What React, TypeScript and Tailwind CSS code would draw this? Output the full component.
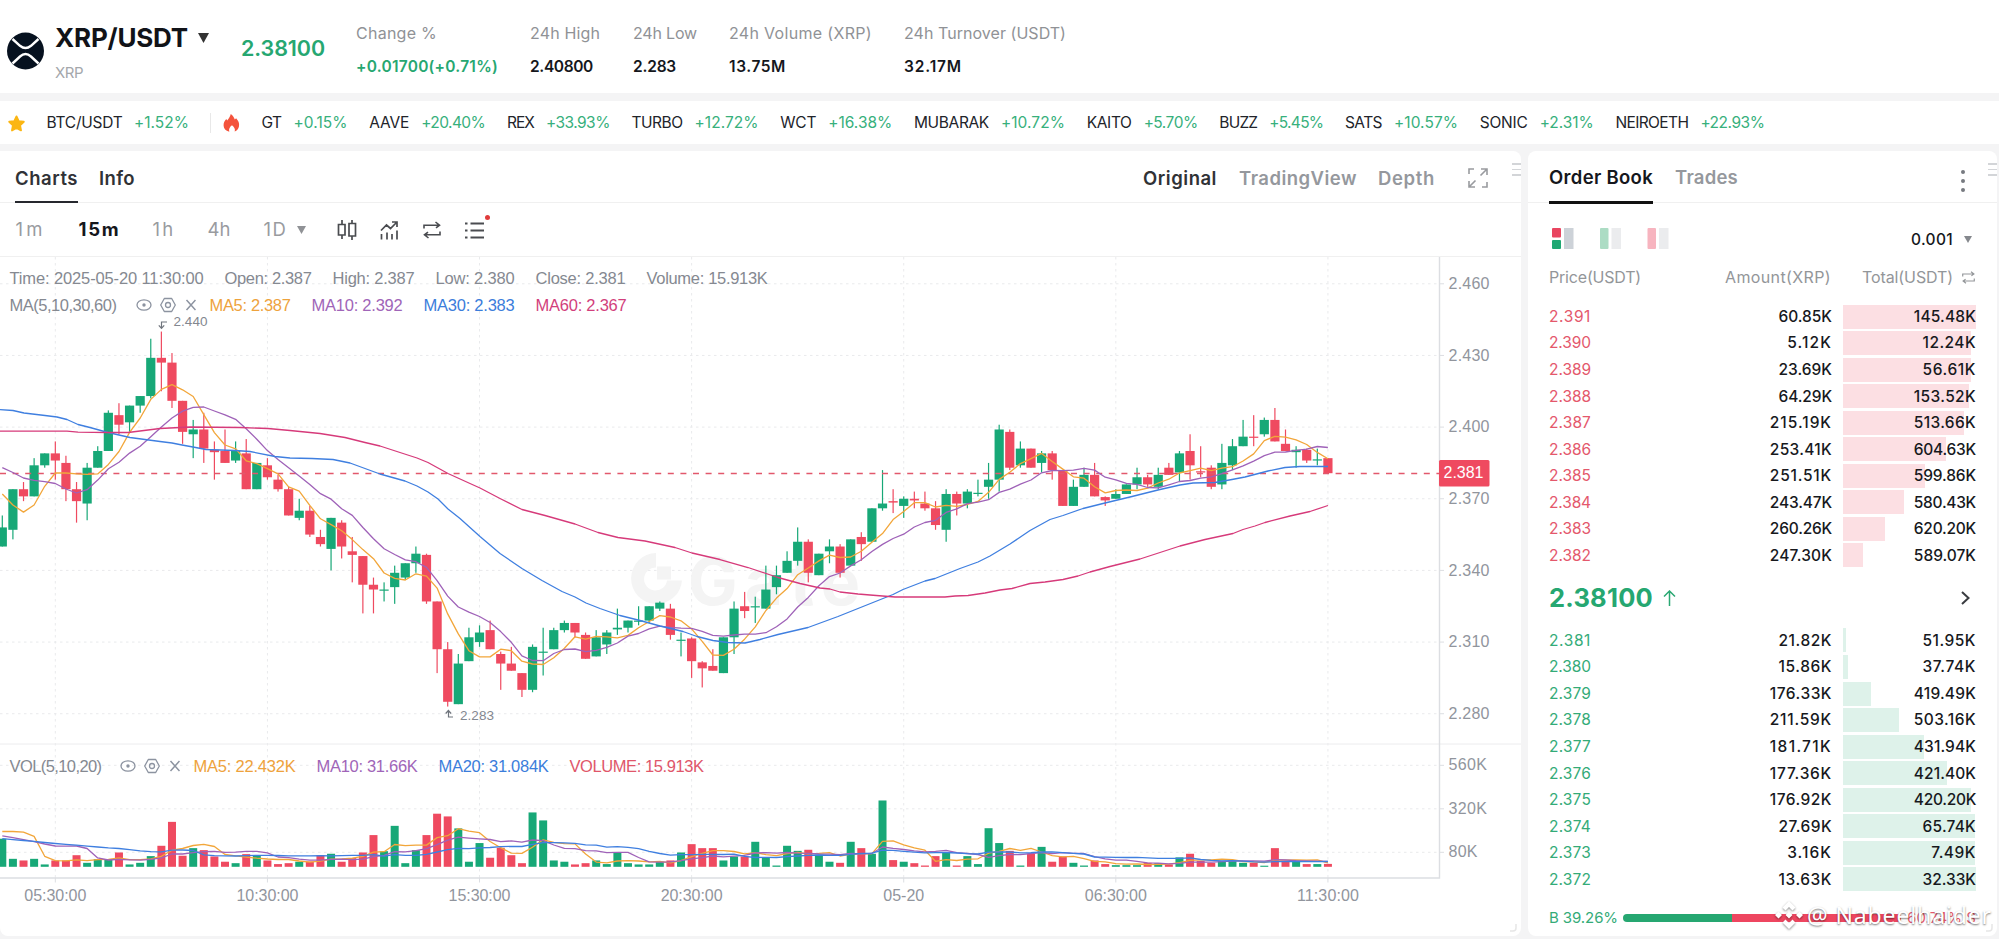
import React, { useLayoutEffect, useRef, useState } from 'react';

// [open, high, low, close] in thousandths
const CANDLES: number[][] = [
  [2350, 2363, 2350, 2358], [2357, 2374, 2353, 2374], [2374, 2377, 2369, 2371], [2371, 2387, 2371, 2384],
  [2384, 2389, 2383, 2389], [2389, 2394, 2378, 2386], [2385, 2388, 2369, 2374], [2374, 2377, 2360, 2369],
  [2368, 2385, 2361, 2383], [2383, 2392, 2383, 2390], [2390, 2407, 2390, 2406], [2405, 2410, 2397, 2401],
  [2402, 2409, 2398, 2409], [2409, 2413, 2406, 2413], [2413, 2437, 2412, 2429], [2429, 2440, 2415, 2427],
  [2427, 2431, 2408, 2411], [2411, 2411, 2393, 2398], [2397, 2403, 2387, 2399], [2399, 2406, 2385, 2391],
  [2390.5, 2394, 2378, 2389.5], [2390, 2399, 2385, 2385], [2386, 2394, 2385, 2390], [2389, 2395, 2374, 2374],
  [2374, 2385, 2374, 2385], [2384, 2387, 2378, 2379], [2378, 2380, 2373, 2374], [2374, 2375, 2363, 2363],
  [2362, 2370, 2361, 2365], [2365, 2367, 2354, 2355], [2354, 2357, 2350, 2351], [2349, 2362, 2340, 2362],
  [2360, 2361, 2345, 2350], [2348, 2354, 2335, 2346.5], [2346, 2346, 2322, 2334], [2334, 2337, 2322, 2332],
  [2332, 2335, 2327, 2332], [2333, 2342, 2326, 2339], [2337, 2343, 2336, 2343], [2343, 2350, 2339, 2347],
  [2346.5, 2347, 2326, 2327], [2327, 2327, 2297, 2307], [2307, 2310, 2283, 2285], [2284, 2305, 2284, 2301],
  [2302, 2316, 2302, 2312], [2310, 2317, 2308, 2314], [2315, 2319, 2307, 2307], [2305, 2306, 2290, 2301],
  [2301, 2308, 2298, 2298], [2297, 2297, 2287, 2290], [2290, 2309, 2289, 2308], [2306, 2316, 2296, 2306],
  [2307, 2316, 2307, 2315], [2315, 2319, 2314, 2318], [2318, 2318, 2312, 2314], [2313, 2314, 2303, 2303],
  [2304, 2315, 2304, 2312], [2309, 2315, 2305, 2314], [2315.3, 2324, 2313, 2316], [2316, 2319, 2314, 2319],
  [2319, 2325, 2317, 2319], [2319, 2325, 2318, 2325], [2324, 2327, 2323, 2326.5], [2324, 2326, 2311, 2313],
  [2311, 2314, 2304, 2311], [2311.5, 2312, 2295, 2302], [2301.5, 2302, 2291, 2299], [2300, 2307, 2298, 2298],
  [2297, 2312, 2297, 2312], [2312, 2327, 2305, 2324], [2325, 2331, 2320, 2323], [2324.5, 2329, 2318, 2325],
  [2324, 2342, 2324, 2332], [2333, 2342, 2330, 2338], [2339, 2348, 2339, 2344], [2344, 2358, 2342, 2352],
  [2352, 2353, 2335, 2339], [2338, 2347, 2338, 2347], [2348, 2353, 2343, 2350], [2350, 2351, 2337, 2339],
  [2342, 2353, 2342, 2353], [2354, 2356, 2344, 2351], [2352, 2366, 2352, 2366], [2366, 2382, 2365, 2368],
  [2369, 2374, 2364, 2368.4], [2367, 2371, 2362, 2370], [2370, 2373, 2366, 2369.3], [2368, 2373, 2365, 2366],
  [2366, 2369, 2357, 2359], [2357, 2374, 2352, 2372], [2372, 2373, 2363, 2368], [2368, 2374, 2366, 2373],
  [2372, 2378, 2371, 2372.5], [2375, 2385, 2370, 2378], [2378, 2401, 2373, 2399], [2398, 2399, 2382, 2383],
  [2384, 2394, 2383, 2391], [2391, 2391, 2383, 2383], [2385, 2390, 2381, 2389], [2389, 2390, 2378, 2382],
  [2382, 2382, 2367, 2367], [2367, 2378, 2367, 2375], [2375, 2383, 2375, 2380], [2380, 2385, 2371, 2371],
  [2370.7, 2371, 2367, 2369.3], [2370, 2374, 2370, 2372], [2372, 2376, 2372, 2376], [2376, 2383, 2374, 2379],
  [2379, 2380, 2375, 2376], [2375, 2383, 2374, 2380], [2383, 2385, 2380, 2380], [2381, 2390, 2377, 2389],
  [2390, 2397, 2378, 2384], [2381.5, 2392, 2379, 2381], [2383, 2384, 2374, 2375], [2376, 2393, 2374, 2385],
  [2384, 2395, 2382, 2392], [2392, 2403, 2392, 2396], [2396, 2405, 2392, 2395.8], [2397, 2404, 2396, 2403],
  [2403, 2408, 2394, 2394], [2393, 2399, 2390, 2390], [2389.5, 2392, 2383, 2390.5], [2390.5, 2391, 2385, 2386],
  [2386, 2391, 2384, 2386.5], [2387, 2387, 2380.7, 2380.7],
];

// volume in K, one per candle
const VOLUMES = [
  155, 44, 35, 44, 13, 35, 35, 64, 22, 42, 42, 79, 13, 22, 59, 116, 248, 61, 103, 92, 57, 28, 20, 70, 61, 35, 15, 20, 28, 29, 64,
  72, 28, 48, 79, 175, 86, 226, 20, 92, 175, 293, 278, 212, 28, 131, 50, 105, 64, 20, 300, 256, 35, 28, 13, 20, 35, 15, 77, 20,
  13, 13, 28, 35, 79, 125, 103, 103, 35, 57, 57, 138, 50, 7, 116, 88, 94, 66, 28, 22, 138, 103, 72, 366, 37, 28, 20, 7, 59, 81,
  7, 59, 15, 213, 131, 88, 7, 72, 110, 28, 57, 22, 7, 35, 15, 9, 9, 9, 22, 20, 13, 52, 72, 33, 22, 33, 35, 22, 22, 6, 103, 28,
  33, 15, 15, 16,
];

// values that precede the visible range, needed by the short averages
const PREV_CLOSES = [2394, 2394, 2394, 2394, 2394, 2397, 2386, 2369, 2350];
const PREV_VOLUMES = [139, 139, 139, 139, 139, 139, 139, 139, 139, 139, 147, 147, 147, 147, 147, 44, 55, 159, 562];

const MA30 =
  '0,410.2 13,411 24,413.5 45,416 57,417.5 67,420 78,425 90,428 108,433 130,438 160,442 172,443.5 182,445.5 193,447.5 206,450 235,451 250,452 275,457 290,458.5 312,459 333,460 350,463.5 365,469 380,474.5 405,481.5 417,486.5 428,492.5 438,499.5 448,509.5 460,519 480,537 500,554 522,569 542,581 562,592 575,597.5 586,603.5 600,609 620,616 640,621 660,626.5 683,632 697,637 713,641 728,643 745,643.5 760,640 778,635 808,628 838,617 868,605 893,595 903,590 925,581.5 935,579 960,569 978,562.5 990,556.5 1010,544.5 1030,531 1050,520 1063,516 1083,509 1105,503.5 1130,497.5 1160,490 1180,485.5 1193,483.5 1215,483 1232,480 1245,477.5 1268,471.5 1285,468 1300,467 1328,467';
const MA60 =
  '0,431.7 67,431.7 78,432.7 108,433 128,433 140,431.5 160,429 190,427.5 240,428 268,429 290,431 320,434 345,438 365,443 380,446.5 400,453 417,458.5 428,463 448,474 470,484 480,488.5 500,499 522,510 545,516 575,524.5 598,533 618,538 645,541.5 675,548 692,553.5 720,560 748,568 778,578 800,584 820,588.5 830,589.5 840,592.5 858,594.5 870,595.5 895,597.5 945,597.5 955,596.5 968,596 985,593.5 1000,590.5 1012,589 1030,584 1045,582.5 1063,580 1078,576.5 1090,572.5 1110,567 1140,559.5 1160,553 1180,546.5 1205,540 1233,534 1243,530 1255,526.5 1265,523 1290,516.5 1310,512 1328,506';

const TICKERS: [string, number, string, number][] = [
  ['GT', 20, '+0.15%', 54],
  ['AAVE', 40, '+20.40%', 64],
  ['REX', 27, '+33.93%', 64],
  ['TURBO', 51, '+12.72%', 64],
  ['WCT', 36, '+16.38%', 64],
  ['MUBARAK', 75, '+10.72%', 64],
  ['KAITO', 45, '+5.70%', 54],
  ['BUZZ', 38, '+5.45%', 54],
  ['SATS', 37, '+10.57%', 64],
  ['SONIC', 48, '+2.31%', 54],
  ['NEIROETH', 73, '+22.93%', 64],
];

const ASKS: [string, string, string, number][] = [
  ['2.391', '60.85K', '145.48K', 133],
  ['2.390', '5.12K', '12.24K', 128],
  ['2.389', '23.69K', '56.61K', 128],
  ['2.388', '64.29K', '153.52K', 126],
  ['2.387', '215.19K', '513.66K', 121],
  ['2.386', '253.41K', '604.63K', 103],
  ['2.385', '251.51K', '599.86K', 82],
  ['2.384', '243.47K', '580.43K', 61],
  ['2.383', '260.26K', '620.20K', 41.5],
  ['2.382', '247.30K', '589.07K', 20],
];

const BIDS: [string, string, string, number][] = [
  ['2.381', '21.82K', '51.95K', 2.5],
  ['2.380', '15.86K', '37.74K', 5],
  ['2.379', '176.33K', '419.49K', 28],
  ['2.378', '211.59K', '503.16K', 56],
  ['2.377', '181.71K', '431.94K', 80.5],
  ['2.376', '177.36K', '421.40K', 103.5],
  ['2.375', '176.92K', '420.20K', 127.5],
  ['2.374', '27.69K', '65.74K', 131.5],
  ['2.373', '3.16K', '7.49K', 132],
  ['2.372', '13.63K', '32.33K', 133],
];

const candleX = (i: number) => 2.3 + i * 10.605;
const priceY = (p: number) => 427.6 + (2400 - p) * 2.3885;
const volY = (v: number) => 867.3 - v * 0.1812;

const average = (prev: number[], values: number[], n: number) => {
  const all = [...prev, ...values];
  return values.map((_, i) => {
    const end = i + prev.length + 1;
    const part = all.slice(Math.max(0, end - n), end);
    return part.reduce((a, b) => a + b, 0) / part.length;
  });
};

const toPoints = (values: number[], y: (v: number) => number) =>
  values.map((v, i) => `${candleX(i).toFixed(1)},${y(v).toFixed(1)}`).join(' ');

// Spaces the letters so that the label takes exactly w pixels
const Fit = ({ w, children, className = '' }: { w: number; children: string; className?: string }) => {
  const ref = useRef<HTMLSpanElement>(null);
  const [spacing, setSpacing] = useState(0);
  useLayoutEffect(() => {
    if (ref.current) {
      const natural = ref.current.getBoundingClientRect().width;
      setSpacing((w - natural) / children.length);
    }
  }, [w, children]);
  return (
    <span className={`block shrink-0 whitespace-nowrap ${className}`} style={{ width: w }}>
      <span ref={ref} style={{ letterSpacing: spacing }}>{children}</span>
    </span>
  );
};

const SwapIcon = ({ className }: { className: string }) => (
  <svg className={className} viewBox="0 0 18 18" fill="none" stroke="currentColor" strokeWidth="1.6">
    <path d="M1 7.5V4.2h15.5M12.5 1l4 3.2-3.5 2.6M17 10.5v3.3H1.5M5.500 17l-4-3.200 3.500-2.600" />
  </svg>
);

const StudyIcons = () => (
  <svg className="w-[60px] h-[18px] shrink-0 text-[#8c93a0]" viewBox="0 0 60 18" fill="none" stroke="currentColor" strokeWidth="1.3">
    <ellipse cx="8" cy="9" rx="7" ry="5.200" />
    <circle cx="8" cy="9" r="1.700" fill="currentColor" stroke="none" />
    <path d="M28.300 2.500h7.400l3.600 6.500-3.600 6.500h-7.400L24.700 9z" strokeLinejoin="round" />
    <circle cx="32" cy="9" r="2.500" />
    <path d="M50.500 4l9 10M59.500 4l-9 10" strokeWidth="1.500" />
  </svg>
);

const Header = () => {
  const stats: [string, number, string, number, number][] = [
    ['24h High', 70, '2.40800', 63, 103],
    ['24h Low', 64, '2.283', 43, 96],
    ['24h Volume (XRP)', 143, '13.75M', 57, 175],
    ['24h Turnover (USDT)', 162, '32.17M', 58, 175],
  ];
  return (
    <header className="h-[93px] bg-white flex pt-[16px] pl-[7px]">
      <svg className="w-[37px] h-[38px] mt-[16px] mr-[11px]" viewBox="0 0 37 38">
        <circle cx="18.500" cy="19" r="18.500" fill="#06111f" />
        <g fill="none" stroke="#fff" strokeWidth="2.400">
          <path d="M5.500 7l7.500 6.800q5.500 4.400 11 0L31.500 7" />
          <path d="M5.500 31.500l7.500-7q5.500-4.800 11 0l7.500 7" />
        </g>
      </svg>
      <div className="w-[186px]">
        <div className="flex items-center h-[43px]">
          <Fit w={133} className="text-[26px] font-bold text-[#111318]">XRP/USDT</Fit>
          <svg className="w-[11px] h-[10px] ml-[10px] text-[#333]" viewBox="0 0 11 10"><path d="M0 0h11L5.500 10z" fill="currentColor" /></svg>
        </div>
        <Fit w={28} className="mt-[2.500px] text-[15px] text-[#a4a7ab]">XRP</Fit>
      </div>
      <Fit w={84} className="mt-[15px] mr-[31px] text-[21.500px] leading-[34px] font-semibold text-[#26a771]">2.38100</Fit>
      <div className="w-[174px] text-[16px] leading-[34px]">
        <Fit w={81} className="text-[#909296]">Change %</Fit>
        <Fit w={142} className="text-[15.500px] font-semibold text-[#26a771]">+0.01700(+0.71%)</Fit>
      </div>
      {stats.map(([label, lw, value, vw, col]) => (
        <div key={label} className="shrink-0 text-[16px] leading-[34px]" style={{ width: col }}>
          <Fit w={lw} className="text-[#909296]">{label}</Fit>
          <Fit w={vw} className="text-[15.500px] font-semibold text-[#15171c]">{value}</Fit>
        </div>
      ))}
    </header>
  );
};

const TickerBar = () => (
  <div className="h-[43px] mt-[8px] bg-white flex items-center pl-[7px] pt-px text-[15.500px]">
    <svg className="w-[19px] h-[19px] mr-[20.500px]" viewBox="0 0 24 24">
      <path d="M12 3l2.800 6 6.400.800-4.700 4.500 1.200 6.400L12 17.600l-5.700 3.100 1.200-6.400L2.800 9.800 9.200 9z" fill="#fbb613" stroke="#fbb613" strokeWidth="2.400" strokeLinejoin="round" />
    </svg>
    <Fit w={76} className="text-[#22242a]">BTC/USDT</Fit>
    <Fit w={55} className="ml-[11.500px] text-[#37b07c]">+1.52%</Fit>
    <div className="w-px h-[20px] bg-[#e8e8e8] ml-[21px] mr-[12px]" />
    <svg className="w-[17px] h-[18px] mr-[21.500px]" viewBox="0 0 17 18">
      <path d="M7.800 0C10 1.800 11.300 3.600 11.800 5.600l1.300-1.300C15.500 7 16.500 9 16 12.200c-.400 2.600-2 4.600-4.300 5.300.700-2.500-.300-4.500-2.700-6.300-2.300 1.700-3.500 3.800-2.700 6.500C2.500 16.800.800 14.700.600 11.700.400 9 1.500 6.800 3.300 4.900l.900 1.700C5.500 4.600 7 3 7.800 0z" fill="#f4533c" />
    </svg>
    <div className="flex gap-[21.700px]">
      {TICKERS.map(([name, nw, change, cw]) => (
        <div key={name} className="flex gap-[12px]">
          <Fit w={nw} className="text-[#22242a]">{name}</Fit>
          <Fit w={cw} className="text-[#37b07c]">{change}</Fit>
        </div>
      ))}
    </div>
  </div>
);

const DragHandle = () => (
  <div className="absolute right-0 top-[12px] w-[9px] flex flex-col gap-[4px]">
    <div className="h-[1.500px] bg-[#d3d5d8]" />
    <div className="h-[1.500px] bg-[#d3d5d8]" />
    <div className="h-[1.500px] bg-[#d3d5d8]" />
  </div>
);

const Grip = () => (
  <svg className="absolute right-[4px] bottom-[4px] w-[8px] h-[8px]" viewBox="0 0 8 8"><path d="M7 0v4q0 3-3 3H1" fill="none" stroke="#e6e6e6" strokeWidth="1.500" /></svg>
);

const Toolbar = () => (
  <div className="h-[54px] shrink-0 flex items-center pl-[15.500px] border-b border-[#f0f0f0] text-[18.500px] text-[#999b9f]">
    <Fit w={30}>1m</Fit>
    <Fit w={42} className="ml-[33px] font-bold text-[#15171c]">15m</Fit>
    <Fit w={23} className="ml-[32px]">1h</Fit>
    <Fit w={23} className="ml-[32px]">4h</Fit>
    <Fit w={24} className="ml-[33px]">1D</Fit>
    <svg className="w-[9px] h-[8px] ml-[9.500px]" viewBox="0 0 9 8"><path d="M0 0h9L4.500 8z" fill="#909296" /></svg>
    <svg className="w-[20px] h-[20px] ml-[31px] mt-px text-[#4a4c50]" viewBox="0 0 20 20" fill="none" stroke="currentColor" strokeWidth="1.700">
      <path d="M5 0v4M5 15v4M15 0v3M15 16v4M1.500 4.500h6.500v10.500H1.500zM12 3.500h6.500v12.500H12z" />
    </svg>
    <svg className="w-[19px] h-[19px] ml-[23px] mt-px text-[#4a4c50]" viewBox="0 0 19 19" fill="none" stroke="currentColor" strokeWidth="1.700">
      <path d="M1 9.500L6.500 4l4 3.500L16.500 1.500M12 1h5v5M1.500 13v5.500M7 11.500v7M12 13v5.500M17 9.500v9" />
    </svg>
    <SwapIcon className="w-[18px] h-[18px] ml-[24px] mt-px text-[#4a4c50]" />
    <div className="relative ml-[24px] mt-px">
      <svg className="w-[19px] h-[17px] text-[#4a4c50]" viewBox="0 0 19 17" fill="none" stroke="currentColor" strokeWidth="1.800">
        <path d="M0 1.500h2.500M5.500 1.500H19M0 8.500h2.500M5.500 8.500H19M0 15.500h2.500M5.500 15.500H19" />
      </svg>
      <div className="absolute left-[20px] top-[-7px] w-[5px] h-[5px] rounded-full bg-[#e03b3b]" />
    </div>
  </div>
);

const Chart = () => {
  const closes = CANDLES.map((c) => c[3]);
  const gridX = [5, 25, 45, 65, 85, 105, 125].map(candleX);
  const times = ['05:30:00', '10:30:00', '15:30:00', '20:30:00', '05-20', '06:30:00', '11:30:00'];
  return (
    <svg className="block w-[1521px] h-[678px]" viewBox="0 257.500 1521 678" fontFamily="'Liberation Sans', Arial, sans-serif">
      {/* grid */}
      <g stroke="#e9eaec" strokeDasharray="2.500 3.500">
        {gridX.map((x) => <line key={x} x1={x} x2={x} y1="257.500" y2="878" />)}
        {[2460, 2430, 2400, 2370, 2340, 2310, 2280].map((p) => (
          <line key={p} x1="0" x2="1439" y1={priceY(p)} y2={priceY(p)} />
        ))}
        {[560, 320, 80].map((v) => <line key={v} x1="0" x2="1439" y1={volY(v)} y2={volY(v)} />)}
      </g>

      {/* watermark */}
      <g fill="#f4f4f4">
        <path d="M656 553.500A25.500 25.500 0 1 0 682 581H667A11.500 11.500 0 1 1 656 568z" />
        <rect x="657" y="567" width="14" height="13" />
        <text x="688" y="605" fontSize="66" fontWeight="bold" fontFamily="Inter, sans-serif" textLength="172">Gate</text>
      </g>

      {/* axes */}
      <line x1="0" x2="1521" y1="744.500" y2="744.500" stroke="#ececee" />
      <path d="M1439.500 257.500V878.500H0" fill="none" stroke="#dcdee2" strokeWidth="1.400" />
      {gridX.map((x) => <line key={x} x1={x} x2={x} y1="878" y2="883" stroke="#dcdee2" />)}

      {/* candles */}
      {CANDLES.map(([o, h, l, c], i) => {
        const color = c >= o ? '#17a877' : '#ef4a60';
        const x = candleX(i);
        const top = priceY(Math.max(o, c));
        const height = Math.max(1.2, Math.abs(o - c) * 2.3885);
        return (
          <g key={i} fill={color}>
            <rect x={x - 0.6} y={priceY(h)} width="1.200" height={priceY(l) - priceY(h)} />
            <rect x={x - 4.6} y={top} width="9.200" height={height} />
            <rect x={x - 4} y={volY(VOLUMES[i])} width="8" height={867.3 - volY(VOLUMES[i])} />
          </g>
        );
      })}
      <line x1="0" x2="1439" y1="474" y2="474" stroke="#e2586c" strokeWidth="1.300" strokeDasharray="6 6.600" />

      {/* moving averages */}
      <g fill="none" strokeWidth="1.300" strokeLinejoin="round">
        <polyline points={toPoints(average(PREV_CLOSES, closes, 5), priceY)} stroke="#f2a63a" />
        <polyline points={toPoints(average(PREV_CLOSES, closes, 10), priceY)} stroke="#9f62b8" />
        <polyline points={MA30} stroke="#3f7fe0" />
        <polyline points={MA60} stroke="#d63a7a" />
        <polyline points={toPoints(average(PREV_VOLUMES, VOLUMES, 5), volY)} stroke="#f2a63a" />
        <polyline points={toPoints(average(PREV_VOLUMES, VOLUMES, 10), volY)} stroke="#9f62b8" />
        <polyline points={toPoints(average(PREV_VOLUMES, VOLUMES, 20), volY)} stroke="#3f7fe0" />
      </g>

      {/* extremes */}
      <g fill="#83878f" fontSize="13.500">
        <text x="173.500" y="326.500" textLength="34">2.440</text>
        <text x="460" y="720.500" textLength="34">2.283</text>
        <path d="M167 322.500h-5.500v6M158.800 325.800l2.700 3 2.700-3M453 717.500h-4.500v-6M445.700 714l2.700-3 2.700 3" fill="none" stroke="#6f747c" strokeWidth="1.200" />
      </g>

      {/* axis labels */}
      <g fill="#91959d" fontSize="16">
        {[2460, 2430, 2400, 2370, 2340, 2310, 2280].map((p) => (
          <g key={p}>
            <line x1="1440" x2="1444" y1={priceY(p)} y2={priceY(p)} stroke="#dcdee2" />
            <text x="1448.500" y={priceY(p) + 5.2} textLength="41">{(p / 1000).toFixed(3)}</text>
          </g>
        ))}
        {[560, 320, 80].map((v) => (
          <g key={v}>
            <line x1="1440" x2="1444" y1={volY(v)} y2={volY(v)} stroke="#dcdee2" />
            <text x="1448.500" y={volY(v) + 4.8} textLength={v === 80 ? 29 : 38.5}>{v}K</text>
          </g>
        ))}
        {times.map((t, i) => (
          <text key={t} x={gridX[i]} y="901.500" textAnchor="middle" textLength={t.length > 5 ? 62 : 41}>{t}</text>
        ))}
      </g>
      <rect x="1439" y="460.500" width="50.500" height="26.500" rx="1.500" fill="#ef4a60" />
      <text x="1443.500" y="478.500" fontSize="16" fill="#fff" textLength="40">2.381</text>
    </svg>
  );
};

const legendRow = "absolute left-[9.500px] flex items-center h-[20px] gap-[21px] text-[16.500px] text-[#858991] font-['Liberation_Sans',Arial,sans-serif]";

const ChartPanel = () => (
  <section className="relative w-[1521px] h-[785px] bg-white rounded-tr-lg rounded-b-lg flex flex-col">
    <DragHandle />
    <div className="h-[52px] shrink-0 flex pl-[15px] border-b border-[#f0f0f0] text-[18.500px] leading-[54px] font-semibold text-[#303236]">
      <div className="h-[52px] border-b-[2.500px] border-[#26282e]"><Fit w={63}>Charts</Fit></div>
      <Fit w={36} className="ml-[21px]">Info</Fit>
      <Fit w={74} className="ml-auto">Original</Fit>
      <Fit w={118} className="ml-[22px] text-[#95989d]">TradingView</Fit>
      <Fit w={57} className="ml-[21px] text-[#95989d]">Depth</Fit>
      <svg className="w-[20px] h-[20px] mt-[17px] ml-[33px] mr-[33px] text-[#999b9f]" viewBox="0 0 20 20" fill="none" stroke="currentColor" strokeWidth="1.600">
        <path d="M1 6V1h5M19 14v5h-5M12.500 7.500L18.500 1.500M13 1h6v6M7.500 12.500L1.500 18.500M1 13v6h6" />
      </svg>
    </div>
    <Toolbar />
    <div className="relative">
      <Chart />
      <div className={`${legendRow} top-[11px]`}>
        <Fit w={194}>Time: 2025-05-20 11:30:00</Fit>
        <Fit w={87}>Open: 2.387</Fit>
        <Fit w={82}>High: 2.387</Fit>
        <Fit w={79}>Low: 2.380</Fit>
        <Fit w={90}>Close: 2.381</Fit>
        <Fit w={121}>Volume: 15.913K</Fit>
      </div>
      <div className={`${legendRow} top-[38px]`}>
        <Fit w={107}>MA(5,10,30,60)</Fit>
        <div className="flex items-center gap-[14px] -ml-[2px]">
          <StudyIcons />
          <Fit w={81} className="text-[#eea23c]">MA5: 2.387</Fit>
        </div>
        <Fit w={91} className="text-[#a065b8]">MA10: 2.392</Fit>
        <Fit w={91} className="text-[#3b7ddb]">MA30: 2.383</Fit>
        <Fit w={91} className="text-[#d23f7c]">MA60: 2.367</Fit>
      </div>
      <div className={`${legendRow} top-[499px]`}>
        <Fit w={92}>VOL(5,10,20)</Fit>
        <div className="flex items-center gap-[14px] -ml-[3px]">
          <StudyIcons />
          <Fit w={102} className="text-[#eea23c]">MA5: 22.432K</Fit>
        </div>
        <Fit w={101} className="text-[#a065b8]">MA10: 31.66K</Fit>
        <Fit w={110} className="text-[#3b7ddb]">MA20: 31.084K</Fit>
        <Fit w={134} className="text-[#e0566a]">VOLUME: 15.913K</Fit>
      </div>
    </div>
    <Grip />
  </section>
);

const BookRow = ({ row, ask }: { row: [string, string, string, number]; ask?: boolean }) => {
  const [price, amount, total, depth] = row;
  return (
    <div className="flex h-[24px] items-center">
      <Fit w={42} className={ask ? 'text-[#e4586c]' : 'text-[#34ab78]'}>{price}</Fit>
      <div className="w-[241px] flex justify-end text-[#17191d] font-medium">
        <Fit w={(amount.length - 1) * 8.7 + 10}>{amount}</Fit>
      </div>
      <div className="relative ml-[11px] w-[133px] h-[24px] flex items-center justify-end text-[#17191d] font-medium">
        <div className={`absolute left-0 top-0 h-full ${ask ? 'bg-[#fcdfe3]' : 'bg-[#def2ea]'}`} style={{ width: depth }} />
        <Fit w={(total.length - 1) * 8.7 + 10} className="relative">{total}</Fit>
      </div>
    </div>
  );
};

const OrderBook = () => (
  <section className="relative w-[469px] h-[785px] bg-white rounded-lg">
    <DragHandle />
    <div className="h-[52px] flex pl-[21px] border-b border-[#f0f0f0] text-[18.500px] leading-[53px] font-semibold text-[#15171c]">
      <div className="h-[53px] border-b-[3px] border-[#111]"><Fit w={104}>Order Book</Fit></div>
      <Fit w={63} className="ml-[22px] text-[#95989d]">Trades</Fit>
      <div className="ml-auto mr-[32px] mt-[19px] flex flex-col gap-[5px]">
        <div className="size-[4px] rounded-full bg-[#777a80]" />
        <div className="size-[4px] rounded-full bg-[#777a80]" />
        <div className="size-[4px] rounded-full bg-[#777a80]" />
      </div>
    </div>
    <div className="flex items-start pt-[25px] pl-[24px] h-[57px]">
      <svg className="w-[118px] h-[21px]" viewBox="0 0 118 21">
        <rect width="9" height="9.500" rx="1" fill="#e94560" />
        <rect y="12" width="9" height="9" rx="1" fill="#1fa873" />
        <rect x="12" width="9.500" height="21" fill="#cdd2d8" />
        <rect x="48" width="8.500" height="21" rx="1" fill="#acdcc4" />
        <rect x="59.500" width="9.500" height="21" fill="#ebecee" />
        <rect x="95.500" width="8.500" height="21" rx="1" fill="#f7b4bf" />
        <rect x="107" width="9.500" height="21" fill="#ebecee" />
      </svg>
      <Fit w={42} className="ml-auto text-[15.500px] leading-[23px] font-medium text-[#15171c]">0.001</Fit>
      <svg className="w-[8px] h-[7px] mt-[8px] ml-[11px] mr-[25px]" viewBox="0 0 8 7"><path d="M0 0h8L4 7z" fill="#85888d" /></svg>
    </div>
    <div className="flex items-center h-[34px] pl-[21px] text-[16px] text-[#939699]">
      <Fit w={92}>Price(USDT)</Fit>
      <Fit w={106} className="ml-[84px]">Amount(XRP)</Fit>
      <Fit w={91} className="ml-[31px]">Total(USDT)</Fit>
      <SwapIcon className="w-[13px] h-[13px] ml-[9px]" />
    </div>
    <div className="mt-[10.500px] pl-[21px] flex flex-col gap-[2.550px] text-[15.500px]">
      {ASKS.map((row) => <BookRow key={row[0]} row={row} ask />)}
    </div>
    <div className="flex items-center h-[61px] pl-[21px]">
      <Fit w={104} className="text-[25.500px] font-bold text-[#26a771]">2.38100</Fit>
      <svg className="w-[13px] h-[16px] ml-[10px]" viewBox="0 0 13 16" fill="none" stroke="#2aa873" strokeWidth="1.500"><path d="M6.500 16V1M1 6.500l5.500-5.500L12 6.500" /></svg>
      <svg className="w-[9px] h-[14px] ml-auto mr-[27px]" viewBox="0 0 9 14" fill="none" stroke="#3a3c40" strokeWidth="2"><path d="M1 1l6.500 6L1 13" /></svg>
    </div>
    <div className="pl-[21px] flex flex-col gap-[2.550px] text-[15.500px]">
      {BIDS.map((row) => <BookRow key={row[0]} row={row} />)}
    </div>
    <div className="relative flex items-center h-[24px] mt-[15px] pl-[21px] text-[15px]">
      <Fit w={69} className="text-[#34ab78]">B 39.26%</Fit>
      <div className="ml-[5px] flex w-[278px] h-[8px] rounded-full overflow-hidden">
        <div className="w-[109px] bg-[#26a771]" />
        <div className="flex-1 bg-[#ee4660]" />
      </div>
      <Fit w={69} className="ml-[6px] text-[#e4586c]">60.74% S</Fit>
      {/* author stamp over the ratio bar */}
      <div className="absolute left-[246px] top-[-7px] flex items-center h-[32px] text-white text-[23px] font-['Noto_Sans','Open_Sans',sans-serif] [text-shadow:0_1px_2px_rgba(0,0,0,0.55)]">
        <svg className="w-[30px] h-[28px] mr-[3px] drop-shadow-[0_1px_1px_rgba(0,0,0,0.45)]" viewBox="0 0 30 28" fill="#fff">
          <path d="M15 0l6.500 6.500-3 3L15 6l-3.500 3.500-3-3zM4.500 10.500L8 14l-3.500 3.500L1 14zM25.500 10.500L29 14l-3.500 3.500L22 14zM15 10.500l3.500 3.500-3.500 3.500-3.500-3.500zM15 28l-6.500-6.500 3-3L15 22l3.500-3.500 3 3z" />
        </svg>
        <Fit w={185}>@ Nabeelhaider</Fit>
      </div>
    </div>
    <Grip />
  </section>
);

const App: React.FC = () => (
  <div className="w-[1999px] h-[939px] overflow-hidden bg-[#f4f4f5] font-['Inter',sans-serif]">
    <Header />
    <TickerBar />
    <div className="mt-[7px] flex gap-[7px]">
      <ChartPanel />
      <OrderBook />
    </div>
  </div>
);

export default App;
